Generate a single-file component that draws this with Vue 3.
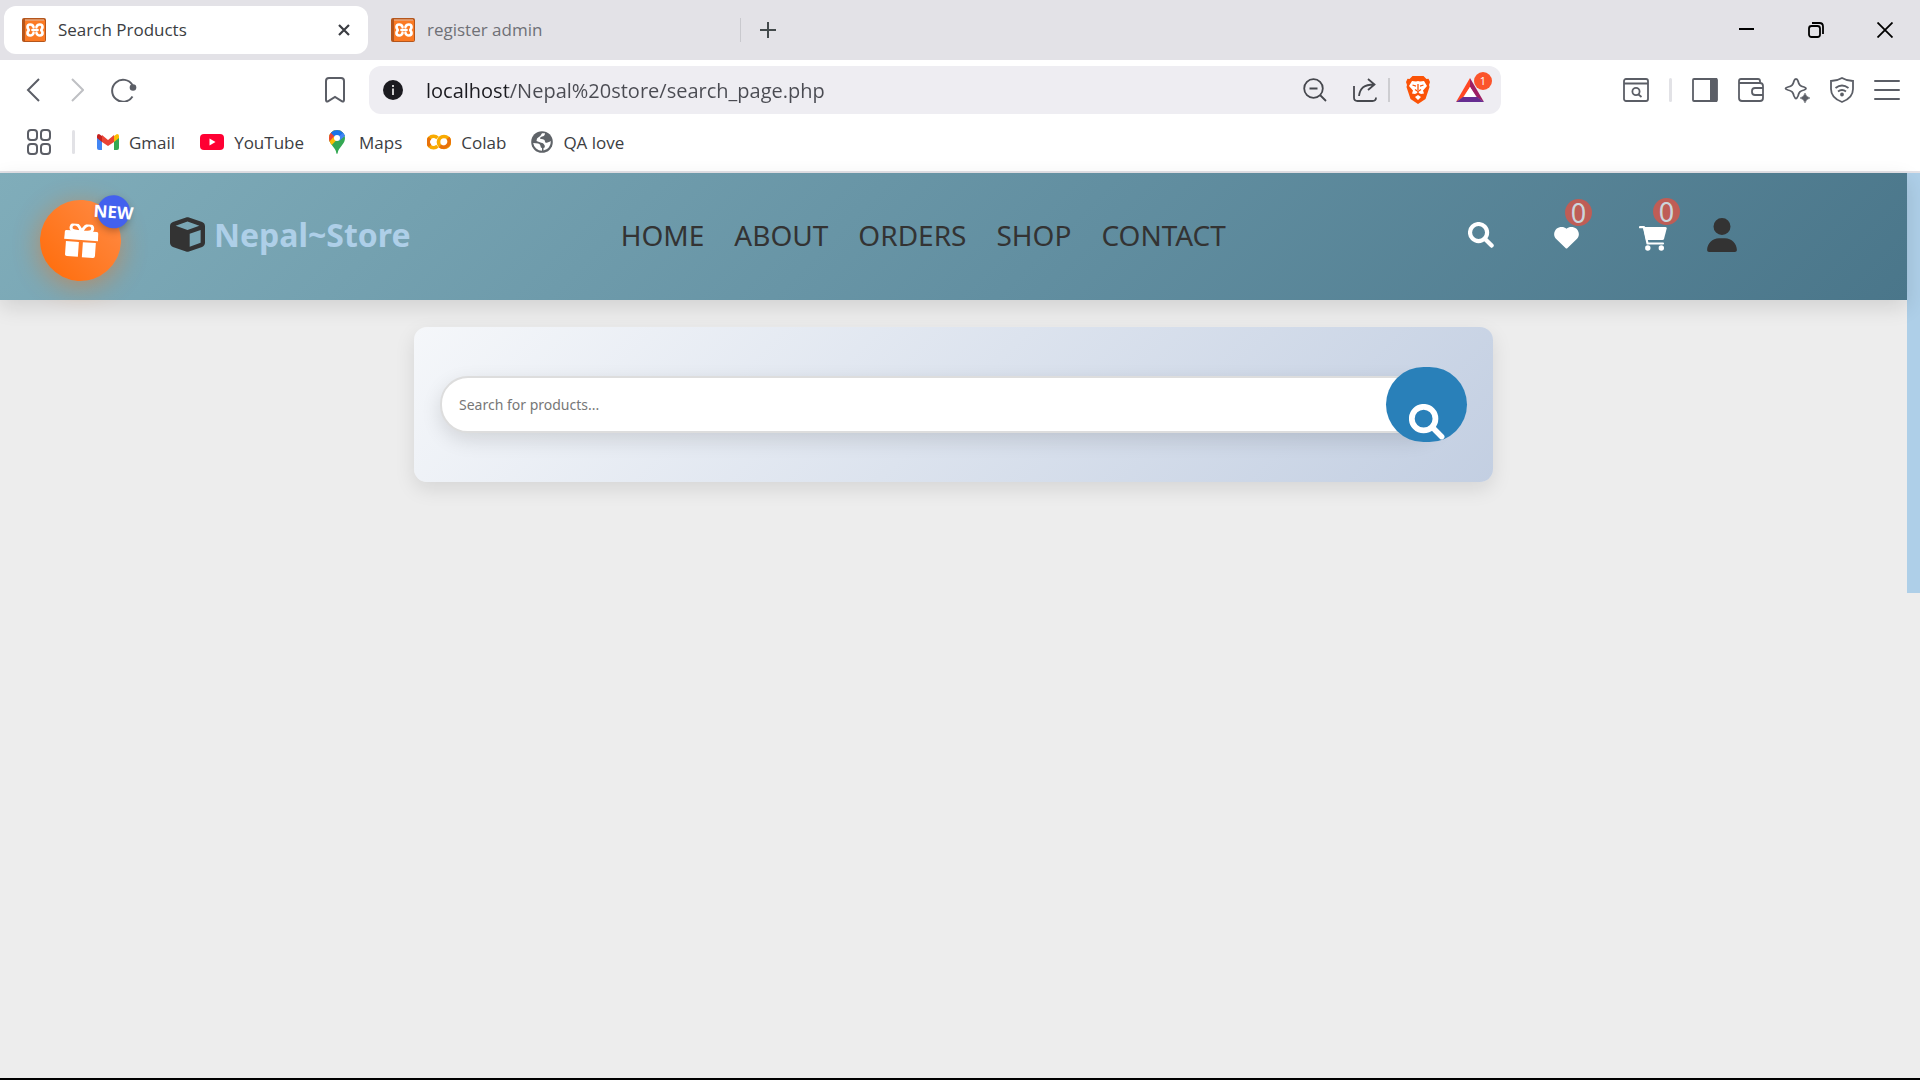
<script setup>
import { ref } from 'vue'

const address = ref('localhost/Nepal%20store/search_page.php')
const query = ref('')
const links = ['HOME', 'ABOUT', 'ORDERS', 'SHOP', 'CONTACT']
const tabs = [
  { title: 'Search Products', active: true },
  { title: 'register admin', active: false }
]
</script>

<template>
  <div class="window">
    <div class="tab-strip">
      <div v-for="tab in tabs" :key="tab.title" class="tab" :class="{ active: tab.active }">
        <svg class="favicon" width="24" height="24" viewBox="0 0 24 24">
          <rect width="24" height="24" rx="2" fill="#b5561c" />
          <rect x="3" y="2" width="20" height="21" fill="#fb7a24" />
          <path d="M3 2h19" stroke="#e9a77b" stroke-width="1.5" />
          <path d="M11.500 9C10.500 5.500 5.500 5.800 5.500 9c0 1.800 1.200 2 1.200 3s-1.200 1.200-1.200 3c0 3.200 5 3.500 6 0M14.500 9c1-3.500 6-3.200 6 0 0 1.800-1.200 2-1.200 3s1.200 1.200 1.200 3c0 3.200-5 3.500-6 0M10.500 12h5" fill="none" stroke="#fff" stroke-width="2.700" stroke-linejoin="round" stroke-linecap="round" />
        </svg>
        <span class="tab-title">{{ tab.title }}</span>
        <button v-if="tab.active" class="icon-button" aria-label="Close tab">
          <svg width="12" height="12" viewBox="0 0 12 12"><path d="M1 1l10 10M11 1L1 11" stroke="#3b3d42" stroke-width="2.200" /></svg>
        </button>
      </div>
      <button class="icon-button new-tab" aria-label="New tab">
        <svg width="16" height="16" viewBox="0 0 16 16"><path d="M8 0v16M0 8h16" stroke="#444a4c" stroke-width="2" /></svg>
      </button>
      <div class="window-controls">
        <button class="icon-button" aria-label="Minimize">
          <svg width="16" height="16" viewBox="0 0 16 16"><path d="M0 7h15" stroke="#000" stroke-width="2" /></svg>
        </button>
        <button class="icon-button" aria-label="Restore">
          <svg width="16" height="16" viewBox="0 0 16 16" fill="none" stroke="#000" stroke-width="1.800"><rect x="1" y="4" width="11" height="11" rx="2.500" /><path d="M4 1h7.500C13.500 1 15 2.500 15 4.500V12" /></svg>
        </button>
        <button class="icon-button" aria-label="Close">
          <svg width="16" height="16" viewBox="0 0 16 16"><path d="M.5.5l15 15M15.500.5l-15 15" stroke="#000" stroke-width="1.800" /></svg>
        </button>
      </div>
    </div>

    <div class="toolbar">
      <div class="history">
        <button class="icon-button" aria-label="Back">
          <svg width="17" height="24" viewBox="0 0 17 24" fill="none" stroke="#5b5e66" stroke-width="2"><path d="M13 1L2 12l11 11" /></svg>
        </button>
        <button class="icon-button" aria-label="Forward">
          <svg width="14" height="24" viewBox="0 0 14 24" fill="none" stroke="#bfc0c4" stroke-width="2"><path d="M2 1l11 11L2 23" /></svg>
        </button>
        <button class="icon-button" aria-label="Reload">
          <svg width="26" height="24" viewBox="0 0 26 24"><path d="M21.500 7A11 11 0 1 0 21.500 18.500" fill="none" stroke="#5b5e66" stroke-width="2" /><circle cx="22" cy="9.500" r="3.300" fill="#5b5e66" /></svg>
        </button>
      </div>
      <button class="icon-button bookmark" aria-label="Bookmark this page">
        <svg width="20" height="26" viewBox="0 0 20 26" fill="none" stroke="#5b5e66" stroke-width="2"><path d="M4 1h12q3 0 3 3v19q0 2-2 1.300L10 20l-7 4.300Q1 25 1 23V4q0-3 3-3z" /></svg>
      </button>
      <div class="address">
        <button class="icon-button" aria-label="Site information">
          <svg width="20" height="20" viewBox="0 0 20 20"><circle cx="10" cy="10" r="10" fill="#1b1b20" /><path d="M10 8.500V15M10 5v2" stroke="#eee" stroke-width="1.700" /></svg>
        </button>
        <input v-model="address" class="address-input" type="text" aria-label="Address" spellcheck="false" />
        <div class="address-tools">
          <button class="icon-button" aria-label="Zoom out">
            <svg width="24" height="24" viewBox="0 0 24 24" fill="none" stroke="#46484e" stroke-width="1.800"><circle cx="10.500" cy="10.500" r="9.300" /><path d="M6.500 10.500h8M17 17l6 6" /></svg>
          </button>
          <button class="icon-button" aria-label="Share">
            <svg width="24" height="24" viewBox="0 0 24 24" fill="none" stroke="#46484e" stroke-width="1.800"><path d="M1 8v11.500Q1 23 4.500 23h15q3.500 0 3.500-3.500M6 18C7 10 11 6.500 21 6.500M15 1l6.500 5.500L15 12" /></svg>
          </button>
          <span class="divider"></span>
          <button class="icon-button" aria-label="Brave Shields">
            <svg width="24" height="28" viewBox="0 0 24 28"><path d="M6.500 0h11l3 3 2-.2L24 6l-1 3 .5 2-4 12-7.500 5-7.500-5L.5 11 1 9 0 6l1.500-3.200 2 .2z" fill="#fb5307" /><path d="M6 5l4 .6 2-.6 2 .6 4-.6 3 5-4 4.500 1 3-3 .5-3-1.500-3 1.500-3-.5 1-3L3 10zM9 21l3-2 3 2-3 3z" fill="#fff" /><path d="M6.500 9l3.500 1.200M17.500 9L14 10.200M12 8v6M9 13.500l3 2 3-2M12 15.500V18" fill="none" stroke="#fb5307" stroke-width="1.300" /></svg>
          </button>
          <button class="icon-button rewards" aria-label="Brave Rewards, 1 new">
            <svg width="28" height="24" viewBox="0 0 28 24"><path d="M14 0L0 24l7-4.500L14 9z" fill="#ff4724" /><path d="M14 0l14 24-7-4.500L14 9z" fill="#9e1f63" /><path d="M0 24h28l-7-5H7z" fill="#662d91" /><path d="M14 9l6 10H8z" fill="#fff" /></svg>
            <span class="rewards-count">1</span>
          </button>
        </div>
      </div>
      <div class="extensions">
        <button class="icon-button" aria-label="Search tabs">
          <svg width="26" height="24" viewBox="0 0 26 24" fill="none" stroke="#5b5e66" stroke-width="1.800"><rect x="1" y="1" width="24" height="22" rx="2" /><path d="M1 5.500h24M15.500 16.500l3 2.500" /><circle cx="13" cy="13.500" r="3.600" /></svg>
        </button>
        <span class="divider light"></span>
        <button class="icon-button" aria-label="Sidebar">
          <svg width="26" height="24" viewBox="0 0 26 24"><rect x="1" y="1" width="24" height="22" rx="1" fill="none" stroke="#5b5e66" stroke-width="1.800" /><path d="M18 0h7v24h-7z" fill="#5b5e66" /></svg>
        </button>
        <button class="icon-button" aria-label="Wallet">
          <svg width="26" height="24" viewBox="0 0 26 24" fill="none" stroke="#5b5e66" stroke-width="1.800"><path d="M22 5V3q0-2-2-2H3Q1 1 1 3v17q0 3 3 3h18q3 0 3-3V8q0-3-3-3H1M25 10h-8q-3 0-3 3v1q0 3 3 3h8" /></svg>
        </button>
        <button class="icon-button" aria-label="AI chat">
          <svg width="26" height="26" viewBox="0 0 26 26"><path d="M12 2q1.500 0 2 2c1 4 2 5 6 6q4 1.500 0 3c-4 1-5 2-6 6q-2 5-4 0c-1-4-2-5-6-6q-5-1.500 0-3c4-1 5-2 6-6q.5-2 2-2z" fill="none" stroke="#5b5e66" stroke-width="1.800" /><path d="M21 16q1 4 5 5-4 1-5 5-1-4-5-5 4-1 5-5z" fill="#5b5e66" stroke="#5b5e66" stroke-width=".5" /></svg>
        </button>
        <button class="icon-button" aria-label="VPN">
          <svg width="24" height="26" viewBox="0 0 24 26" fill="none" stroke="#5b5e66" stroke-width="1.800"><path d="M12 1q5 3 11 3v8q0 9-11 13Q1 21 1 12V4q6 0 11-3zM5.500 11q6.500-5 13 0M8 14.500q4-3 8 0" /><circle cx="12" cy="17.500" r="1" /></svg>
        </button>
        <button class="icon-button" aria-label="Menu">
          <svg width="26" height="22" viewBox="0 0 26 22"><path d="M1 2h24M1 11h24M1 20h24" stroke="#5b5e66" stroke-width="2" stroke-linecap="round" /></svg>
        </button>
      </div>
    </div>

    <nav class="bookmarks" aria-label="Bookmarks">
      <button class="icon-button" aria-label="All bookmarks">
        <svg width="26" height="26" viewBox="0 0 26 26" fill="none" stroke="#5b5e66" stroke-width="2"><rect x="2" y="1" width="9" height="10" rx="3" /><rect x="15" y="1" width="9" height="10" rx="3" /><rect x="2" y="15" width="9" height="10" rx="3" /><rect x="15" y="15" width="9" height="10" rx="3" /></svg>
      </button>
      <span class="divider light"></span>
      <a href="#">
        <svg width="22" height="24" viewBox="0 0 22 24"><path d="M0 6v12q0 2 2 2h3V9z" fill="#4285f4" /><path d="M22 6v12q0 2-2 2h-3V9z" fill="#34a853" /><path d="M17 6v6l5-4V6q0-2-2-2z" fill="#fbbc04" /><path d="M0 6v2l5 4V6L2 4Q0 4 0 6z" fill="#c5221f" /><path d="M5 5l6 5 6-5v7l-6 4-6-4z" fill="#ea4335" /></svg>
        Gmail
      </a>
      <a href="#">
        <svg width="24" height="16" viewBox="0 0 24 16"><rect width="24" height="16" rx="4" fill="#ff0033" /><path d="M9.500 4.500v7l6-3.500z" fill="#fff" /></svg>
        YouTube
      </a>
      <a href="#" class="maps">
        <svg width="16" height="24" viewBox="0 0 16 24"><defs><clipPath id="pin"><path d="M8 0a8 8 0 0 0-8 8c0 3 1.200 5 3 7.200C5.500 18.500 7 20 7.300 23q.7 2 1.400 0C9 20 10.500 18.500 13 15.200 14.800 13 16 11 16 8a8 8 0 0 0-8-8z" /></clipPath></defs><g clip-path="url(#pin)"><path d="M0 0h16v24H0z" fill="#34a853" /><path d="M0 18L14 3V0H0z" fill="#fbbc04" /><path d="M0 12l9-10H0z" fill="#ea4335" /><path d="M1 2l5 5L16 6V0H1z" fill="#1a73e8" /><path d="M8 8l7-6 1 4-6 5z" fill="#4285f4" /></g><circle cx="8" cy="8" r="3" fill="#fff" /></svg>
        Maps
      </a>
      <a href="#">
        <svg width="24" height="16" viewBox="0 0 24 16" fill="none" stroke-width="3.700"><path d="M10.500 12.200A5.700 5.700 0 1 1 10.500 3.800" stroke="#f9ab00" /><path d="M3 4a5.700 5.700 0 0 0 0 8" stroke="#e8710a" /><circle cx="17" cy="8" r="5.500" stroke="#f9ab00" /><path d="M21 4a5.700 5.700 0 0 1-8 8" stroke="#e8710a" /></svg>
        Colab
      </a>
      <a href="#">
        <svg width="22" height="22" viewBox="0 0 22 22"><circle cx="11" cy="11" r="10.800" fill="#5f6368" /><path d="M11 2.200h3q0 3-3 3.300-2 .2-2 2.300l3 .5q2 .3 2 2.200t2.500 1 3.300-1.500a9 9 0 0 1-7.300 9.500V17q2-.5 1-3t-4-2.500L5.500 10q0-3 2-3.800T11 2.200z" fill="#fff" /><path d="M2.200 12l5 .5q2.300.5 2.300 2.500t1.500 2v2.800A9 9 0 0 1 2.200 12z" fill="#fff" /></svg>
        QA love
      </a>
    </nav>

    <div class="viewport">
      <div class="page">
        <header class="site-header">
          <button class="gift" aria-label="New offers">
            <svg width="34" height="34" viewBox="0 1 34 34" fill="#fff"><path d="M2 8h30q2 0 2 2v7H0v-7q0-2 2-2zM2 19h13v15H4q-2 0-2-2zM19 19h13v13q0 2-2 2H19z" /><path d="M17 9C15 4 13 1.500 10 1.500S5.500 4 6.500 6.500 12 9 17 9zm0 0c2-5 4-7.500 7-7.500S28.500 4 27.500 6.500 22 9 17 9z" fill="none" stroke="#fff" stroke-width="3" /></svg>
            <span class="gift-badge">NEW</span>
          </button>
          <div class="header-inner">
            <a href="#" class="logo">
              <svg width="35" height="35" viewBox="0 0 512 512"><path fill="#333" d="M234.500 5.700c13.900-5 29.100-5 43.100 0l192 68.600C495 83.400 512 107.500 512 134.600V377.400c0 27-17 51.200-42.500 60.300l-192 68.600c-13.900 5-29.100 5-43.100 0l-192-68.600C17 428.600 0 404.500 0 377.400V134.600c0-27 17-51.200 42.500-60.300l192-68.600zM256 66L82.300 128 256 190l173.700-62L256 66zm32 368.600l160-57.100v-188L288 246.600v188z" /></svg>
              Nepal~Store
            </a>
            <nav class="site-nav" aria-label="Main">
              <a v-for="link in links" :key="link" href="#">{{ link }}</a>
            </nav>
            <div class="actions">
              <a href="#" aria-label="Search" class="action">
                <svg width="26" height="26" viewBox="0 0 512 512" fill="none" stroke="#fff"><circle cx="208" cy="208" r="168" stroke-width="82" /><path d="M335 335l130 130" stroke-width="84" stroke-linecap="round" /></svg>
              </a>
              <a href="#" aria-label="Wishlist, 0 items" class="action heart">
                <svg width="25" height="22" viewBox="0 0 25 22" fill="#fff"><path d="M12.500 1.800C15-.6 19.500-.6 22.500 1.800 25.500 5 25.700 9 22.800 12L13.500 21q-1 1-2 0L2.200 12C-.7 9-.5 5 2.500 1.800 5.500-.6 10-.6 12.500 1.800z" /></svg>
                <span class="count">0</span>
              </a>
              <a href="#" aria-label="Cart, 0 items" class="action cart">
                <svg width="28" height="25" viewBox="0 0 28 25"><path d="M1 1.200h4L8.500 17.500H24" fill="none" stroke="#fff" stroke-width="2.200" stroke-linecap="round" stroke-linejoin="round" /><path d="M4 1h22.500q1.500 0 1.200 1.500L25 13q-.3 1-1.500 1H7z" fill="#fff" /><circle cx="8.800" cy="22" r="2.700" fill="#fff" /><circle cx="22.300" cy="22" r="2.700" fill="#fff" /></svg>
                <span class="count">0</span>
              </a>
              <a href="#" aria-label="Account" class="action">
                <svg width="30" height="34" viewBox="0 0 448 512"><path fill="#333" d="M224 256A128 128 0 1 0 224 0a128 128 0 1 0 0 256zm-45.700 48C79.800 304 0 383.800 0 482.300C0 498.700 13.300 512 29.700 512H418.300c16.400 0 29.700-13.300 29.700-29.700C448 383.800 368.200 304 269.700 304H178.300z" /></svg>
              </a>
            </div>
          </div>
        </header>

        <main>
          <form class="search-card" @submit.prevent>
            <input v-model="query" class="search-input" type="text" placeholder="Search for products..." aria-label="Search for products" />
            <button class="search-button" type="submit" aria-label="Search">
              <svg width="36" height="36" viewBox="0 0 512 512" fill="none" stroke="#fff"><circle cx="208" cy="208" r="168" stroke-width="82" /><path d="M335 335l130 130" stroke-width="78" stroke-linecap="round" /></svg>
            </button>
          </form>
        </main>
      </div>
      <div class="scroll-track"><div class="scroll-thumb"></div></div>
    </div>
  </div>
</template>

<style>
html,
body {
  margin: 0;
  background: #ededed;
}
</style>

<style scoped>
* {
  box-sizing: border-box;
}

.window {
  display: flex;
  flex-direction: column;
  min-height: 100vh;
  background: #fff;
  border-bottom: 2px solid #000;
  font-family: "Open Sans", "Noto Sans", sans-serif;
  overflow: hidden;
}

svg {
  display: block;
  flex: none;
}

a {
  text-decoration: none;
}

.icon-button {
  display: flex;
  padding: 0;
  border: 0;
  background: none;
}

.divider {
  width: 2px;
  height: 24px;
  background: #cdcdd1;
}

.divider.light {
  width: 3px;
  border-radius: 2px;
  background: #e2e2e6;
}

/* Tab strip */
.tab-strip {
  display: flex;
  align-items: center;
  height: 60px;
  padding-left: 4px;
  background: #e3e2e7;
}

.tab {
  display: flex;
  align-items: center;
  gap: 12px;
  width: 364px;
  height: 48px;
  padding: 0 18px;
  border-radius: 12px;
  color: #6f7076;
  font-size: 17px;
}

.tab:not(.active) {
  position: relative;
  margin-left: 5px;
  width: 368px;
}

.tab:not(.active)::after {
  content: "";
  position: absolute;
  right: 0;
  width: 1px;
  height: 24px;
  background: #c9c9ce;
}

.tab.active {
  background: #fff;
  color: #3b3d42;
}

.tab-title {
  flex: 1;
  padding-bottom: 2px;
}

.new-tab {
  margin-left: 19px;
}

.window-controls {
  display: flex;
  gap: 53px;
  margin-left: auto;
  padding-right: 27px;
}

/* Toolbar */
.toolbar {
  display: flex;
  align-items: center;
  height: 60px;
}

.history {
  display: flex;
  gap: 27px;
  padding-left: 26px;
}

.bookmark {
  margin: 0 24px 0 188px;
}

.address {
  display: flex;
  flex: 1;
  align-items: center;
  height: 48px;
  padding: 0 17px 0 14px;
  border-radius: 12px;
  background: #eeedf2;
}

.address-input {
  flex: 1;
  min-width: 0;
  height: 40px;
  margin-left: 23px;
  padding: 0;
  border: 0;
  outline: 0;
  background: linear-gradient(90deg, #1b1b20 81px, #4a4b52 81px) text;
  color: #4a4b52;
  -webkit-text-fill-color: transparent;
  font: 20px "Open Sans", "Noto Sans", sans-serif;
}

.address-tools {
  display: flex;
  align-items: center;
  gap: 26px;
}

.address-tools .divider {
  margin: 0 -10px 0 -15px;
}

.rewards {
  position: relative;
}

.rewards-count {
  position: absolute;
  top: -6px;
  right: -8px;
  width: 18px;
  height: 18px;
  border-radius: 9px;
  background: #fb542b;
  color: #fff;
  font-family: "Open Sans", sans-serif;
  font-size: 11px;
  line-height: 18px;
  text-align: center;
}

.extensions {
  display: flex;
  align-items: center;
  gap: 20px;
  margin-left: 122px;
  padding-right: 20px;
}

/* Bookmarks bar */
.bookmarks {
  display: flex;
  align-items: center;
  gap: 25px;
  height: 53px;
  padding: 0 26px 7px;
  border-bottom: 2px solid #e3e2e7;
}

.bookmarks .divider {
  margin: 0 -3px 0 -5px;
}

.bookmarks a {
  display: flex;
  align-items: center;
  gap: 10px;
  color: #3b3d42;
  font-size: 17px;
}

.bookmarks .maps {
  gap: 14px;
}

/* Page */
.viewport {
  display: flex;
  flex: 1;
}

.page {
  flex: 1;
  background: #ededed;
  font-family: "Noto Sans", sans-serif;
}

.scroll-track {
  width: 13px;
  background: #ededed;
}

.scroll-thumb {
  height: 420px;
  background: #aecfe8;
}

.site-header {
  position: relative;
  height: 127px;
  background: linear-gradient(135deg, #80adba 0%, #628fa1 55%, #4a768a 100%);
  box-shadow: 0 7px 20px rgba(0, 0, 0, 0.12);
}

.gift {
  position: absolute;
  top: 27px;
  left: 40px;
  display: flex;
  align-items: center;
  justify-content: center;
  width: 81px;
  height: 81px;
  padding: 0;
  border: 0;
  border-radius: 50%;
  background: linear-gradient(45deg, #ff6b08, #ff8c48);
  box-shadow: 0 5px 27px rgba(255, 107, 8, 0.45);
  transform: rotate(4deg);
}

.gift-badge {
  position: absolute;
  top: -7px;
  right: -7px;
  display: flex;
  align-items: center;
  justify-content: center;
  width: 33px;
  height: 33px;
  border-radius: 50%;
  background: #4361ee;
  box-shadow: 0 3px 7px rgba(0, 0, 0, 0.25);
  color: #fff;
  font-family: "Noto Sans", sans-serif;
  font-size: 17px;
  font-weight: 700;
}

.header-inner {
  display: flex;
  align-items: center;
  justify-content: space-between;
  height: 100%;
  padding: 0 170px 4px;
}

.logo {
  display: flex;
  align-items: center;
  gap: 9px;
  color: #aecfe8;
  font-size: 32px;
  font-weight: 700;
}

.site-nav {
  display: flex;
  gap: 30px;
}

.site-nav a {
  color: #333;
  font-size: 28px;
}

.actions {
  display: flex;
  align-items: center;
  padding-left: 32px;
}

.action {
  position: relative;
}

.heart {
  margin: 7px 60px 0;
}

.cart {
  margin: 7px 40px 0 0;
}

.count {
  position: absolute;
  top: -28px;
  right: -13px;
  width: 27px;
  height: 27px;
  border-radius: 50%;
  background: #bf5d56;
  color: #ccd6dc;
  font-size: 27px;
  line-height: 27px;
  text-align: center;
}

.search-card {
  display: flex;
  align-items: center;
  width: calc(100% - 54px);
  max-width: 1079px;
  height: 155px;
  margin: 27px auto;
  padding: 0 26px;
  border-radius: 13px;
  background: linear-gradient(135deg, #f5f7fa 0%, #c3cfe2 100%);
  box-shadow: 0 7px 20px rgba(0, 0, 0, 0.1);
}

.search-input {
  flex: 1;
  min-width: 0;
  height: 57px;
  padding: 0 17px;
  border: 2px solid #ddd;
  border-radius: 28px;
  outline: 0;
  background: #fff;
  box-shadow: 0 7px 20px rgba(0, 0, 0, 0.12);
  font: 14px "Noto Sans", sans-serif;
}

.search-input::placeholder {
  color: #777;
}

.search-button {
  position: relative;
  display: flex;
  align-items: flex-end;
  justify-content: center;
  width: 81px;
  height: 75px;
  margin-left: -54px;
  padding: 0 0 2px;
  border: 0;
  border-radius: 38px;
  background: #2980b9;
}
</style>
